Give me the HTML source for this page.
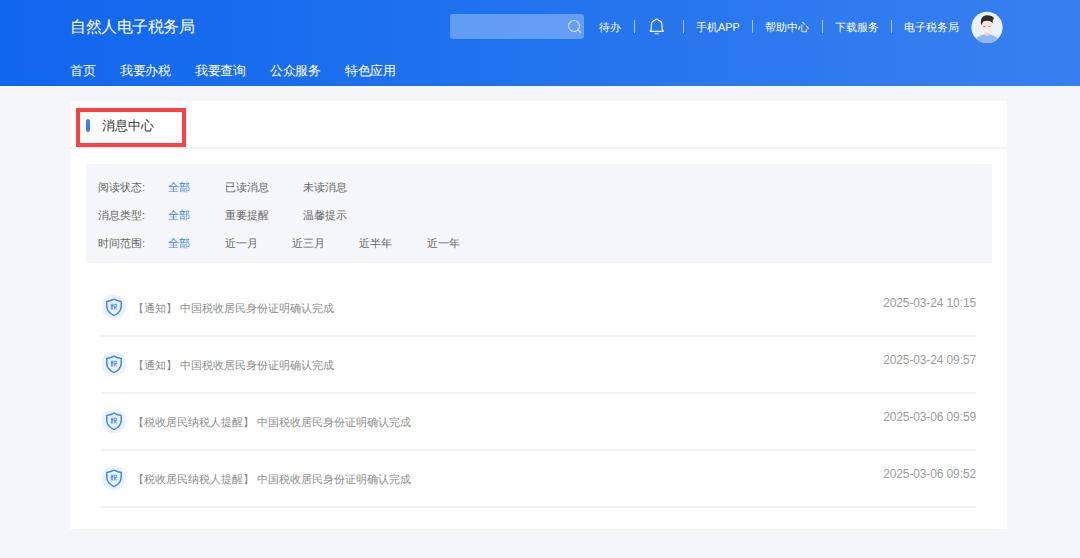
<!DOCTYPE html>
<html><head><meta charset="utf-8">
<style>
*{margin:0;padding:0;box-sizing:border-box}
html,body{width:1080px;height:558px;overflow:hidden;background:#f4f6fa;font-family:"Liberation Sans",sans-serif}
.hdr{position:absolute;left:0;top:0;width:1080px;height:86px;background:linear-gradient(90deg,#1166ee 0%,#2273ee 50%,#3880f0 100%)}
.abs{position:absolute;white-space:nowrap}
.title{left:70px;top:17px;font-size:16px;letter-spacing:-0.5px;color:#fff;line-height:20px}
.search{left:450px;top:14px;width:134px;height:25px;background:rgba(255,255,255,0.3);border-radius:3px}
.tr{top:19.5px;font-size:10.8px;color:#fff;line-height:14px}
.sep{top:20px;width:1px;height:13px;background:rgba(255,255,255,0.6)}
.nav{top:63px;font-size:13px;letter-spacing:-0.4px;color:#fff;line-height:16px}
.card{left:70px;top:101px;width:937px;height:428px;background:#fff}
.ctitle{left:102px;top:118px;font-size:12.6px;color:#333;line-height:16px}
.bar{left:86px;top:119px;width:4px;height:13px;background:#3d7ef5;border-radius:2px}
.redbox{left:76px;top:108px;width:110px;height:39px;border:4px solid #fe4040}
.hline{left:70px;top:147px;width:937px;height:2px;background:#f1f2f5}
.filter{left:86px;top:164px;width:906px;height:99px;background:#f4f6f9}
.f{font-size:11px;color:#666;line-height:14px}
.fb{color:#3b80f4}
.item{font-size:11px;color:#8c8c8c;line-height:14px}
.date{font-size:12px;letter-spacing:-0.12px;color:#9c9c9c;line-height:14px;text-align:right}
.div{left:101px;width:875px;height:2px;background:#f0f1f4}
.icon{width:22px;height:22px}
</style></head><body>
<div class="hdr"></div>
<div class="abs title">自然人电子税务局</div>
<div class="abs search"></div>
<svg class="abs" style="left:566px;top:18px" width="18" height="18" viewBox="0 0 18 18"><circle cx="8" cy="8" r="5.5" fill="none" stroke="#d3dbe8" stroke-width="1.2"/><line x1="12" y1="12" x2="15" y2="15" stroke="#d3dbe8" stroke-width="1.2"/></svg>
<div class="abs tr" style="left:599px">待办</div>
<div class="abs sep" style="left:634px"></div>
<svg class="abs" style="left:644px;top:14px" width="26" height="24" viewBox="0 0 26 24"><path d="M11.2 6.1 C11.5 4.6 13.9 4.6 14.2 6.1 C16.9 6.8 18.1 8.8 18.1 11.4 L18.1 15 C18.1 16.1 19.4 16.5 19.4 17.3 L6.2 17.3 C6.2 16.5 7.3 16.1 7.3 15 L7.3 11.4 C7.3 8.8 8.5 6.8 11.2 6.1 Z" fill="none" stroke="#f4f8ff" stroke-width="1.2" stroke-linejoin="round"/><rect x="10.5" y="18.8" width="4.3" height="1.6" fill="#e6eefc" opacity="0.75"/></svg>
<div class="abs sep" style="left:683px"></div>
<div class="abs tr" style="left:696px">手机APP</div>
<div class="abs sep" style="left:752px"></div>
<div class="abs tr" style="left:765px">帮助中心</div>
<div class="abs sep" style="left:822px"></div>
<div class="abs tr" style="left:835px">下载服务</div>
<div class="abs sep" style="left:891px"></div>
<div class="abs tr" style="left:904px">电子税务局</div>
<svg class="abs" style="left:971px;top:11px" width="32" height="33" viewBox="0 0 32 33"><defs><clipPath id="cc"><circle cx="16" cy="16.4" r="15.6"/></clipPath></defs><circle cx="16" cy="16.4" r="15.6" fill="#eaf3fd"/><g clip-path="url(#cc)"><path d="M2 34 C4 26 10 23.3 16 23.3 C22 23.3 28 26 30 34 Z" fill="#92b8f3"/><rect x="13.9" y="19" width="4.2" height="5.5" fill="#f7cdc6"/><ellipse cx="16" cy="15.6" rx="5.3" ry="6.3" fill="#fde2de"/><path d="M10.2 14 C9 8.5 11 4.2 16 4.2 C19.5 4.2 22.2 5.2 23 7.2 C22.4 7.8 22 8.5 21.8 9.5 L21.6 12.5 C20.6 10.4 18.5 9.8 16 9.8 C13.5 9.8 11.8 10.4 11 12.8 Z" fill="#2d2d2d"/><rect x="12.4" y="15" width="2" height="0.8" fill="#8a7070"/><rect x="17.4" y="15" width="2" height="0.8" fill="#8a7070"/><ellipse cx="15.8" cy="19.6" rx="1.6" ry="0.9" fill="#fff"/></g></svg>

<div class="abs nav" style="left:70px">首页</div>
<div class="abs nav" style="left:120px">我要办税</div>
<div class="abs nav" style="left:195px">我要查询</div>
<div class="abs nav" style="left:270px">公众服务</div>
<div class="abs nav" style="left:345px">特色应用</div>

<div class="abs card"></div>
<div class="abs bar"></div>
<div class="abs ctitle">消息中心</div>
<div class="abs hline"></div>
<div class="abs redbox"></div>
<div class="abs filter"></div>

<div class="abs f" style="left:98px;top:180px">阅读状态:</div>
<div class="abs f fb" style="left:168px;top:180px">全部</div>
<div class="abs f" style="left:225px;top:180px">已读消息</div>
<div class="abs f" style="left:303px;top:180px">未读消息</div>
<div class="abs f" style="left:98px;top:208px">消息类型:</div>
<div class="abs f fb" style="left:168px;top:208px">全部</div>
<div class="abs f" style="left:225px;top:208px">重要提醒</div>
<div class="abs f" style="left:303px;top:208px">温馨提示</div>
<div class="abs f" style="left:98px;top:236px">时间范围:</div>
<div class="abs f fb" style="left:168px;top:236px">全部</div>
<div class="abs f" style="left:225px;top:236px">近一月</div>
<div class="abs f" style="left:292px;top:236px">近三月</div>
<div class="abs f" style="left:359px;top:236px">近半年</div>
<div class="abs f" style="left:427px;top:236px">近一年</div>

<div class="abs item" style="left:132.5px;top:300.6px">【通知】 中国税收居民身份证明确认完成</div>
<div class="abs date" style="right:104px;top:296px">2025-03-24 10:15</div>
<svg class="abs" style="left:100px;top:293px" width="28" height="28" viewBox="0 0 28 28"><circle cx="14" cy="14" r="12.3" fill="#eaf3fe"/><path d="M14 6.2 C11.8 7.6 9.2 8.2 6.8 8.5 L6.8 13.3 C6.8 17.3 9.6 20.6 14 22.6 C18.4 20.6 21.2 17.3 21.2 13.3 L21.2 8.5 C18.8 8.2 16.2 7.6 14 6.2 Z" fill="none" stroke="#4186f2" stroke-width="1.5" stroke-linejoin="round"/><g fill="none" stroke="#4c8cf3" stroke-width="0.9"><path d="M11.4 10.8 V16.6 M12.7 10.6 V16.6 M10.9 12.6 H13.2"/><path d="M14.1 11.2 H16.4 V13.6 H14.1 Z M14.6 13.6 V16.4 M15.9 13.6 V15.6 L16.8 16.4"/></g></svg>
<div class="abs div" style="top:335px"></div>
<div class="abs item" style="left:132.5px;top:357.6px">【通知】 中国税收居民身份证明确认完成</div>
<div class="abs date" style="right:104px;top:353px">2025-03-24 09:57</div>
<svg class="abs" style="left:100px;top:350px" width="28" height="28" viewBox="0 0 28 28"><circle cx="14" cy="14" r="12.3" fill="#eaf3fe"/><path d="M14 6.2 C11.8 7.6 9.2 8.2 6.8 8.5 L6.8 13.3 C6.8 17.3 9.6 20.6 14 22.6 C18.4 20.6 21.2 17.3 21.2 13.3 L21.2 8.5 C18.8 8.2 16.2 7.6 14 6.2 Z" fill="none" stroke="#4186f2" stroke-width="1.5" stroke-linejoin="round"/><g fill="none" stroke="#4c8cf3" stroke-width="0.9"><path d="M11.4 10.8 V16.6 M12.7 10.6 V16.6 M10.9 12.6 H13.2"/><path d="M14.1 11.2 H16.4 V13.6 H14.1 Z M14.6 13.6 V16.4 M15.9 13.6 V15.6 L16.8 16.4"/></g></svg>
<div class="abs div" style="top:392px"></div>
<div class="abs item" style="left:132.5px;top:414.6px">【税收居民纳税人提醒】 中国税收居民身份证明确认完成</div>
<div class="abs date" style="right:104px;top:410px">2025-03-06 09:59</div>
<svg class="abs" style="left:100px;top:407px" width="28" height="28" viewBox="0 0 28 28"><circle cx="14" cy="14" r="12.3" fill="#eaf3fe"/><path d="M14 6.2 C11.8 7.6 9.2 8.2 6.8 8.5 L6.8 13.3 C6.8 17.3 9.6 20.6 14 22.6 C18.4 20.6 21.2 17.3 21.2 13.3 L21.2 8.5 C18.8 8.2 16.2 7.6 14 6.2 Z" fill="none" stroke="#4186f2" stroke-width="1.5" stroke-linejoin="round"/><g fill="none" stroke="#4c8cf3" stroke-width="0.9"><path d="M11.4 10.8 V16.6 M12.7 10.6 V16.6 M10.9 12.6 H13.2"/><path d="M14.1 11.2 H16.4 V13.6 H14.1 Z M14.6 13.6 V16.4 M15.9 13.6 V15.6 L16.8 16.4"/></g></svg>
<div class="abs div" style="top:449px"></div>
<div class="abs item" style="left:132.5px;top:471.6px">【税收居民纳税人提醒】 中国税收居民身份证明确认完成</div>
<div class="abs date" style="right:104px;top:467px">2025-03-06 09:52</div>
<svg class="abs" style="left:100px;top:464px" width="28" height="28" viewBox="0 0 28 28"><circle cx="14" cy="14" r="12.3" fill="#eaf3fe"/><path d="M14 6.2 C11.8 7.6 9.2 8.2 6.8 8.5 L6.8 13.3 C6.8 17.3 9.6 20.6 14 22.6 C18.4 20.6 21.2 17.3 21.2 13.3 L21.2 8.5 C18.8 8.2 16.2 7.6 14 6.2 Z" fill="none" stroke="#4186f2" stroke-width="1.5" stroke-linejoin="round"/><g fill="none" stroke="#4c8cf3" stroke-width="0.9"><path d="M11.4 10.8 V16.6 M12.7 10.6 V16.6 M10.9 12.6 H13.2"/><path d="M14.1 11.2 H16.4 V13.6 H14.1 Z M14.6 13.6 V16.4 M15.9 13.6 V15.6 L16.8 16.4"/></g></svg>
<div class="abs div" style="top:506px"></div>
</body></html>
